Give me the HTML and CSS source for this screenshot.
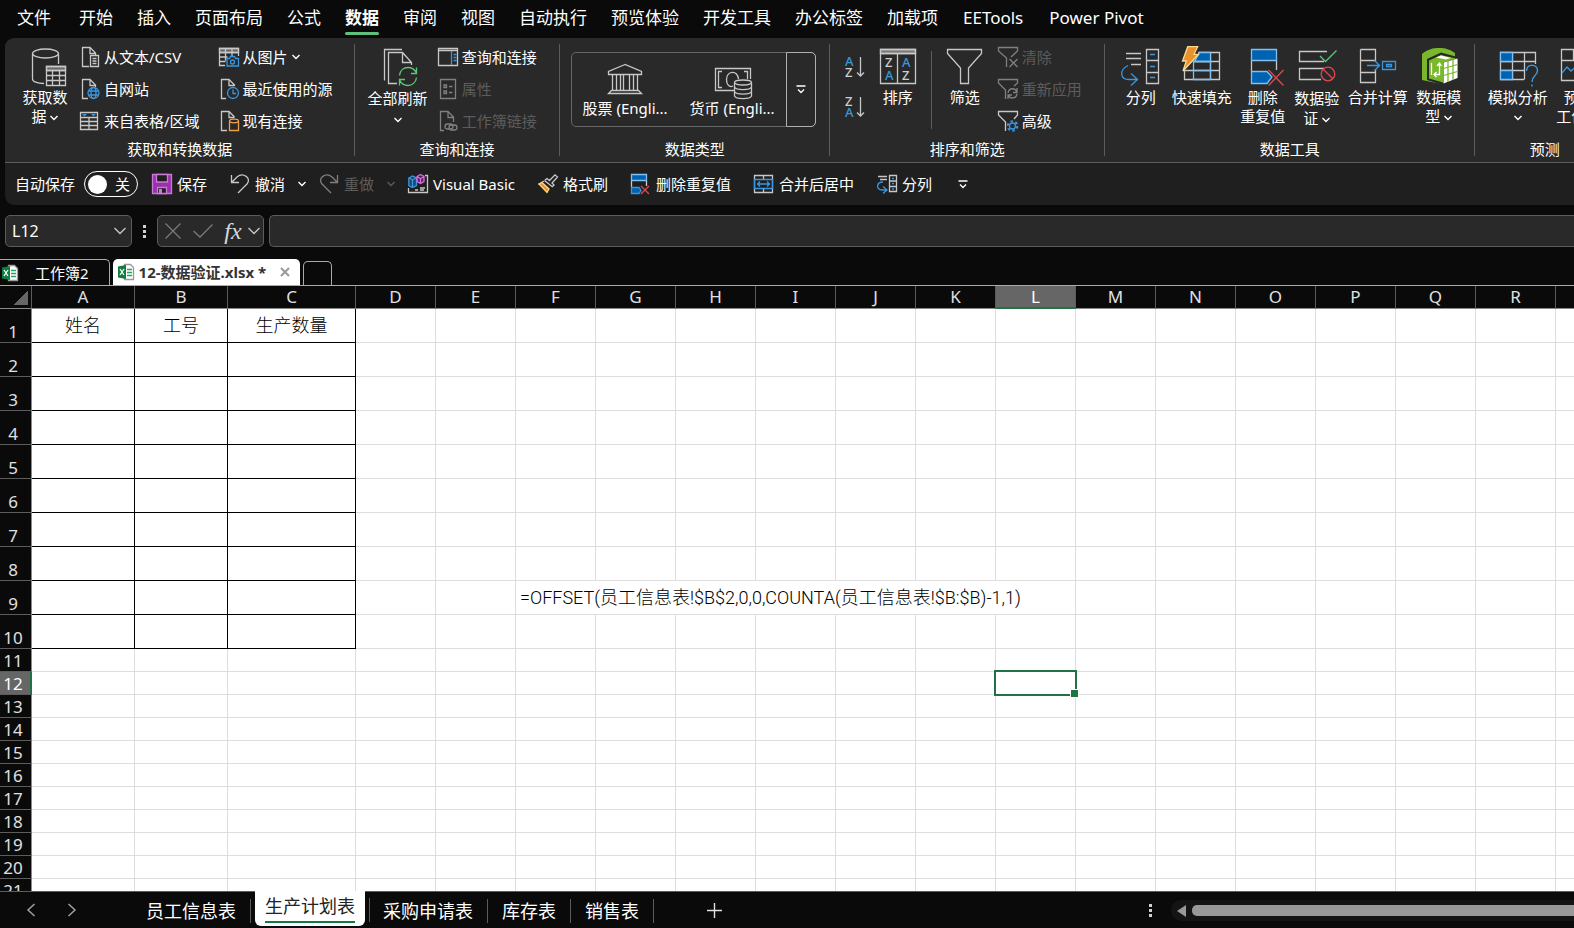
FILE: index.html
```html
<!DOCTYPE html>
<html lang="zh-CN">
<head>
    <meta charset="UTF-8">
    <meta name="viewport" content="width=device-width, initial-scale=1.0">
    <title>12-数据验证.xlsx</title>
    <link rel="stylesheet" href="styles.css">
</head>
<body>
    <!-- Menu -->
    <nav class="menu">
        <a class="menu-item menu-file" href="#">文件</a>
        <a class="menu-item" href="#">开始</a>
        <a class="menu-item" href="#">插入</a>
        <a class="menu-item" href="#">页面布局</a>
        <a class="menu-item" href="#">公式</a>
        <a class="menu-item active" href="#">数据</a>
        <a class="menu-item" href="#">审阅</a>
        <a class="menu-item" href="#">视图</a>
        <a class="menu-item" href="#">自动执行</a>
        <a class="menu-item" href="#">预览体验</a>
        <a class="menu-item" href="#">开发工具</a>
        <a class="menu-item" href="#">办公标签</a>
        <a class="menu-item" href="#">加载项</a>
        <a class="menu-item menu-addin" href="#">EETools</a>
        <a class="menu-item menu-addin" href="#">Power Pivot</a>
    </nav>

    <!-- Ribbon -->
    <div class="ribbon">
        <section class="group group-get">
            <div class="group-body">
                <button class="big-btn">
                    <svg class="icon-big" viewBox="0 0 40 42">
                        <ellipse cx="20.5" cy="7.5" rx="13" ry="4.5"/>
                        <path d="M7.5 7.5V33C7.5 35.5 12 37.5 19 37.5M33.5 7.5V18"/>
                        <path fill="#666" d="M21.5 20.5h19v4h-19z"/>
                        <path d="M21.5 20.5h19v19h-19zM21.5 24.5h19M21.5 29.5h19M21.5 34.5h19M27.5 24.5v15M34.5 24.5v15"/>
                    </svg>
                    <span>获取数<br>据 <svg class="chev" viewBox="0 0 8 8"><path d="M.5 2L4 5.5 7.5 2"/></svg></span>
                </button>
                <div class="small-col">
                    <button class="small-btn">
                        <svg class="icon" viewBox="0 0 20 20"><path d="M9 19.5H2.5V.5H10L15.5 6V8M10 .5V6.5H15.5"/><path d="M10.5 8.5h8v11h-8zM12.5 11.5h4M12.5 14h4M12.5 16.5h4"/></svg>
                        从文本/CSV
                    </button>
                    <button class="small-btn">
                        <svg class="icon" viewBox="0 0 20 20"><path d="M8 19.5H2.5V.5H10L15.5 6V8M10 .5V6.5H15.5"/><g class="blue"><circle cx="13.5" cy="14" r="5.5"/><ellipse cx="13.5" cy="14" rx="2.5" ry="5.5"/><path d="M8.5 12h10M8.5 16h10"/></g></svg>
                        自网站
                    </button>
                    <button class="small-btn">
                        <svg class="icon" viewBox="0 0 20 20"><path d="M.5 1.5h17v17H.5zM.5 6.5h17M.5 10.5h17M.5 14.5h17M9 6.5v12"/><path class="fill-blue" d="M2 3h5L4.500 5.500zM11 3h5L13.500 5.500z"/></svg>
                        来自表格/区域
                    </button>
                </div>
                <div class="small-col">
                    <button class="small-btn">
                        <svg class="icon" viewBox="0 0 20 20"><path fill="#666" d="M.5 1.500h19v4H.5z"/><path d="M6 18.500H.5V1.500h19V9M.5 5.500h19M.5 10h8M.5 14.500h6M6.500 1.500v12M13 1.500v8"/><g class="blue"><path d="M8 11.500h2.500l1-2h4l1 2H19.500v7.500H8z"/><circle cx="13.500" cy="15" r="2"/></g></svg>
                        从图片 <svg class="chev" viewBox="0 0 8 8"><path d="M.5 2L4 5.5 7.5 2"/></svg>
                    </button>
                    <button class="small-btn">
                        <svg class="icon" viewBox="0 0 20 20"><path d="M7 19.5H2.5V.5H10L15.5 6V7M10 .5V6.5H15.5"/><g class="blue"><circle cx="14" cy="14" r="5.5"/><path d="M14 10.500V14.500H17"/></g></svg>
                        最近使用的源
                    </button>
                    <button class="small-btn">
                        <svg class="icon" viewBox="0 0 20 20"><path d="M8 19.5H2.5V.5H10L15.5 6M10 .5V6.5H15.5"/><g class="orange"><ellipse cx="15" cy="10" rx="4.500" ry="1.800"/><path d="M10.500 10v9.500h9V10"/></g></svg>
                        现有连接
                    </button>
                </div>
            </div>
            <div class="group-label">获取和转换数据</div>
        </section>

        <section class="group group-query">
            <div class="group-body">
                <button class="big-btn split">
                    <svg class="icon-big" viewBox="0 0 40 42">
                        <path d="M6.500 34.500V3.500H24M19 37.500H10.500V6.500H24.500L33.500 16.500V19M24.500 6.500V16.500H33.500"/>
                        <g class="green"><path d="M21.500 29.500C22 24 26 21.500 30 21.500C34 21.500 37 24 38.500 27M38.500 21.500V27.500H33M38.500 31.500C38 36.500 34 39.500 30 39.500C26 39.500 23 37 21.500 34M21.500 39.500V33.500H27"/></g>
                    </svg>
                    <span>全部刷新<br><svg class="chev" viewBox="0 0 8 8"><path d="M.5 2L4 5.5 7.5 2"/></svg></span>
                </button>
                <div class="small-col">
                    <button class="small-btn">
                        <svg class="icon" viewBox="0 0 20 20"><path d="M.5 1.500h19v17H.5zM.5 3.500h19"/><g class="blue"><path d="M13.500 4v14"/><path d="M15.500 7.500h3M15.500 10.500h3M15.500 13.500h3"/></g></svg>
                        查询和连接
                    </button>
                    <button class="small-btn" disabled>
                        <svg class="icon" viewBox="0 0 20 20"><path d="M2.500.5h15v19h-15zM6 6h2.500v2.500H6zM6 12h2.500v2.500H6zM11 7.500h3.500M11 13.500h3.500"/></svg>
                        属性
                    </button>
                    <button class="small-btn" disabled>
                        <svg class="icon" viewBox="0 0 20 20"><path d="M6 19.500H2.500V.5H10L15.500 6V11M10 .5V6.500H15.500"/><rect x="7" y="13" width="8" height="5" rx="2.500"/><rect x="11" y="14" width="8" height="5" rx="2.500"/></svg>
                        工作簿链接
                    </button>
                </div>
            </div>
            <div class="group-label">查询和连接</div>
        </section>

        <section class="group group-types">
            <div class="group-body">
                <div class="gallery">
                    <button class="gallery-item">
                        <svg class="icon-gallery" viewBox="0 0 40 36"><path d="M20 2.500L3.500 9.500V12.500H36.500V9.500ZM7.500 12.500V28M11.500 12.500V28M15.500 12.500V28M18.500 12.500V28M24.500 12.500V28M28.500 12.500V28M32.500 12.500V28M6.500 28.500H33.500L36.500 31.500H3.500Z"/></svg>
                        股票 (Engli...
                    </button>
                    <button class="gallery-item">
                        <svg class="icon-gallery" viewBox="0 0 40 36"><path d="M22 28.500H3.500V6.500H38.500V17M10 9.500H6.500V25.500H10M32 9.500H35.500V17M21 24C17 26 14.500 22 14.500 17.500C14.500 9 25.500 7 26.500 17"/><ellipse cx="31" cy="20.500" rx="8.500" ry="2.500"/><path d="M22.500 20.500V34C24 37.500 38 37.500 39.500 34V20.500M22.500 25C24 28.500 38 28.500 39.500 25M22.500 29.500C24 33 38 33 39.500 29.500"/></svg>
                        货币 (Engli...
                    </button>
                    <button class="gallery-more" aria-label="更多"><svg class="more" viewBox="0 0 10 9"><path d="M.5 1H9.500M2 4.500L5 7.500 8 4.500"/></svg></button>
                </div>
            </div>
            <div class="group-label">数据类型</div>
        </section>

        <section class="group group-sort">
            <div class="group-body">
                <div class="order-col">
                    <button class="order-btn" aria-label="升序">
                        <svg class="icon" viewBox="0 0 20 20"><text class="letter-blue" x="0" y="9">A</text><text class="letter" x="0" y="20">Z</text><path d="M15.500 0V19M12 15.500L15.500 19 19 15.500"/></svg>
                    </button>
                    <button class="order-btn" aria-label="降序">
                        <svg class="icon" viewBox="0 0 20 20"><text class="letter" x="0" y="9">Z</text><text class="letter-blue" x="0" y="20">A</text><path d="M15.500 0V19M12 15.500L15.500 19 19 15.500"/></svg>
                    </button>
                </div>
                <button class="big-btn">
                    <svg class="icon-big" viewBox="0 0 40 42">
                        <path fill="#777" d="M2.500 3.500h35v4h-35z"/>
                        <path d="M2.500 3.500h35v34h-35zM2.500 7.500h35M19.500 7.500v30"/>
                        <text class="letter" x="7" y="21">Z</text><text class="letter-blue" x="24" y="21">A</text>
                        <text class="letter-blue" x="7" y="34">A</text><text class="letter" x="24" y="34">Z</text>
                    </svg>
                    <span>排序</span>
                </button>
                <div class="inner-line"></div>
                <button class="big-btn">
                    <svg class="icon-big" viewBox="0 0 40 42"><path d="M2.500 3.500H36.500V7.500L23.500 22V37.500H15.500V22L2.500 7.500Z"/></svg>
                    <span>筛选</span>
                </button>
                <div class="small-col">
                    <button class="small-btn" disabled>
                        <svg class="icon" viewBox="0 0 20 20"><path d="M8.500 20V11L.5 4V.5H19.500V4L13 10M11.500 12L19.500 20M19.500 12L11.500 20"/></svg>
                        清除
                    </button>
                    <button class="small-btn" disabled>
                        <svg class="icon" viewBox="0 0 20 20"><path d="M7.500 20V11L.5 4V.5H19.500V4L16 7M10 14C11 8 18 9 18.500 13M19 9V13.500H15M19 15C18 20 12 20 10.500 16.500M10 20V16H14"/></svg>
                        重新应用
                    </button>
                    <button class="small-btn">
                        <svg class="icon" viewBox="0 0 20 20"><path d="M7.500 20V11L.5 4V.5H19.500V4L16 8"/><g class="blue"><circle cx="14.500" cy="15" r="3"/><circle cx="14.500" cy="15" r="4.800" stroke-width="2" stroke-dasharray="2.500 2.500"/></g></svg>
                        高级
                    </button>
                </div>
            </div>
            <div class="group-label">排序和筛选</div>
        </section>

        <section class="group group-tools">
            <div class="group-body">
                <button class="big-btn">
                    <svg class="icon-big" viewBox="0 0 40 42">
                        <path d="M5 7.500H20M5 12.500H20M10 18.500H20M25.500 3.500h12v34h-12zM25.500 14.500h12M25.500 26.500h12"/>
                        <g class="blue"><path d="M29 8.500h5M29 20.500h5M29 31.500h5M7 19.500C-2 24 -1 33.500 8 33.500H16M10 27.500L16.500 33.500 10 39.500"/></g>
                    </svg>
                    <span>分列</span>
                </button>
                <button class="big-btn">
                    <svg class="icon-big" viewBox="0 0 40 42">
                        <path d="M16 6.500H37.500V33.500H2.500V24M28.500 6.500v27M2.500 24.500h35M12 15.500h25.500"/>
                        <path fill="#0063b1" stroke="#83beec" d="M17.500 6.500H28.500V15.500H12.500Z"/>
                        <path stroke="#83beec" d="M11.500 15.500h17v18h-17zM11.500 24.500h17"/>
                        <path fill="#e8912d" stroke="#fbd98d" d="M5.700.7H15.700L12 8.300H16.500L1 25L4.300 15H.5Z"/>
                    </svg>
                    <span>快速填充</span>
                </button>
                <button class="big-btn">
                    <svg class="icon-big" viewBox="0 0 40 42">
                        <path d="M8.500 14.500V25.500M33.500 14.500V24"/>
                        <path fill="#0063b1" stroke="#83beec" d="M8.500 3.500h25v11h-25zM8.500 25.500H24L29 31L24 37.500H8.500Z"/>
                        <path class="red" d="M25.500 24L40.500 39.500M40.500 24L25.500 39.500"/>
                    </svg>
                    <span>删除<br>重复值</span>
                </button>
                <button class="big-btn split">
                    <svg class="icon-big" viewBox="0 0 40 42">
                        <path d="M30 5.500H2.500V15.500H27M27 22.500H2.500V33.500H24"/>
                        <path class="green" d="M23 10L28.500 15.500 39.500 4.500"/>
                        <g class="red"><circle cx="31" cy="28" r="6.800"/><path d="M26.500 23.500L35.500 32.500"/></g>
                    </svg>
                    <span>数据验<br>证 <svg class="chev" viewBox="0 0 8 8"><path d="M.5 2L4 5.5 7.5 2"/></svg></span>
                </button>
                <button class="big-btn">
                    <svg class="icon-big" viewBox="0 0 40 42">
                        <path d="M2.500 3.500V36.500H17.500V26.500H2.500M2.500 14.500H17.500V3.500H2.500M17.500 14.500V16M17.500 23V26.500"/>
                        <g class="blue"><path d="M9 19.500H21.500M16.500 14.500L21.500 19.500 16.500 24.500M24.500 15.500h13v8h-13zM28.500 18.500h5v2h-5z"/></g>
                    </svg>
                    <span>合并计算</span>
                </button>
                <button class="big-btn">
                    <svg class="icon-big" viewBox="0 0 40 42">
                        <path fill="#78b82a" stroke="none" d="M3 8C9 3 14 2 20 2C27 2 32 4 36 7V13L38.500 14V32L22 38L3 34Z"/>
                        <path fill="#292929" stroke="none" d="M8 13L22 6.500L38.500 11V33L22 38.500L8 34Z"/>
                        <path fill="#78b82a" stroke="none" d="M10 14.500L22 9L37 12.500L24 16.500V36.500L10 32.500Z"/>
                        <path fill="#fff" stroke="none" d="M24.500 16.500L38.500 12.500V32L24.500 37.500Z"/>
                        <path fill="#fff" stroke="none" d="M17 11.500L22 9.500L32 12L27 13.500Z"/>
                        <path stroke="#78b82a" d="M24.500 22.500L38.500 18.500M24.500 29.500L38.500 25.500M29 14V36M34 13V34"/>
                        <path stroke="#fff" d="M12.500 17V29M20.500 17.500V28.500H15.500M18 20L20.500 17 22.500 20M17.500 26L15 28.500 17.500 31"/>
                    </svg>
                    <span>数据模<br>型 <svg class="chev" viewBox="0 0 8 8"><path d="M.5 2L4 5.5 7.5 2"/></svg></span>
                </button>
            </div>
            <div class="group-label">数据工具</div>
        </section>

        <section class="group group-forecast">
            <div class="group-body">
                <button class="big-btn">
                    <svg class="icon-big" viewBox="0 0 40 42">
                        <path d="M26 33.500H2.500V6.500H37.500V18M14.500 6.500v27M26.500 6.500v27M2.500 15.500h35M2.500 24.500h24"/>
                        <path fill="#0063b1" stroke="#83beec" d="M2.500 6.500h12v9h-12zM2.500 24.500h12v9h-12z"/>
                        <g class="blue"><path stroke-width="1.500" d="M28.500 25C28.500 17 39.500 17.500 39.500 24.500C39.500 30 34 29 34 36M34 38.500V40.500"/></g>
                    </svg>
                    <span>模拟分析<br><svg class="chev" viewBox="0 0 8 8"><path d="M.5 2L4 5.5 7.5 2"/></svg></span>
                </button>
                <button class="big-btn">
                    <svg class="icon-big" viewBox="0 0 40 42">
                        <path d="M2.500 3.500h34v31h-34zM2.500 14.500h34M14.500 3.500v11M25.500 3.500v11"/>
                        <path class="blue" d="M3 27L8 21L12 25L20 18L28 26"/>
                    </svg>
                    <span>预测<br>工作表</span>
                </button>
            </div>
            <div class="group-label">预测</div>
        </section>
    </div>

    <!-- Quick access toolbar -->
    <div class="quick">
        <label class="autosave">
            自动保存
            <input class="autosave-input" type="checkbox">
            <span class="switch"><span class="knob"></span>关</span>
        </label>
        <button class="quick-btn">
            <svg class="icon" viewBox="0 0 20 20"><path fill="#9b2fae" stroke="#c77ad6" d="M.5.5h19v19H.5z"/><path fill="#1f1f1f" stroke="#c77ad6" d="M4.500.5h11v7.500h-11zM5.500 13.500h9v6h-9z"/><path fill="#c77ad6" stroke="none" d="M7 15h3v4H7z"/></svg>
            保存
        </button>
        <div class="quick-split">
            <button class="quick-btn">
                <svg class="icon" viewBox="0 0 20 20"><path d="M1.500 1V8.500H9M1.500 8.500L7 3C13-2 22 4 17 10L8 19"/></svg>
                撤消
            </button>
            <button class="arrow-btn" aria-label="撤消列表"><svg class="chev" viewBox="0 0 8 8"><path d="M.5 2L4 5.5 7.5 2"/></svg></button>
            <button class="quick-btn" disabled>
                <svg class="icon" viewBox="0 0 20 20"><path d="M18.500 1V8.500H11M18.500 8.500L13 3C7-2-2 4 3 10L12 19"/></svg>
                重做
            </button>
            <button class="arrow-btn" aria-label="重做列表" disabled><svg class="chev" viewBox="0 0 8 8"><path d="M.5 2L4 5.5 7.500 2"/></svg></button>
            <button class="quick-btn">
                <svg class="icon" viewBox="0 0 20 20"><path d="M17 1.500H19.500V18.500H.5V14M7 16h3M12 14h5M12 16h4"/><path fill="#164a73" stroke="#3a96dd" d="M.8 4L4.500 2L8.500 4V11.500L4.500 13.500L.8 11.500ZM4.500 5.500V13M.8 4L4.500 5.500L8.500 4"/><path fill="#5b2462" stroke="#d66bdd" d="M9 2.500L12.500.5L16 2.500V7.500L12.500 9.500L9 7.500ZM12.500 4.500V9M9 2.500L12.500 4.500L16 2.500"/></svg>
                Visual Basic
            </button>
        </div>
        <button class="quick-btn">
            <svg class="icon" viewBox="0 0 20 20"><path d="M6.500 6.500L14 12.500M7 6L9 4.500L11.500 6.500L17 .8L19.500 3L14 9L16 11L14 13"/><path d="M6 7L.5 10.500"/><path fill="#e8912d" stroke="#fbd98d" d="M1 10L4 8.500L11 15L9 18.500Z"/></svg>
            格式刷
        </button>
        <button class="quick-btn">
            <svg class="icon" viewBox="0 0 20 20"><path d="M.5 7V13M15.500 7V12"/><path fill="#0063b1" stroke="#83beec" d="M.5.5h15v6H.5z"/><path fill="#0063b1" stroke="#3a96dd" d="M.5 13.500H8L10 16.500L8 19.500H.5Z"/><path class="red" d="M10 12L18 20M18 12L10 20"/></svg>
            删除重复值
        </button>
        <button class="quick-btn">
            <svg class="icon" viewBox="0 0 20 20"><path d="M.5 1.500h18v17H.5zM9.500 1.500V5M9.500 15V18.500"/><g class="blue"><path d="M.5 5.500h18v9H.5zM3.500 10h12M6 7.500L3.500 10 6 12.500M13 7.500L15.500 10 13 12.500"/></g></svg>
            合并后居中
        </button>
        <button class="quick-btn">
            <svg class="icon" viewBox="0 0 20 20"><path d="M1 2.500H10M3 5.500H10M12.500 1.500h7v16h-7zM12.500 7h7M12.500 12.500h7"/><g class="blue"><path d="M15 4.500h2M15 9.500h2M15 15h2M6 8C-1 8-1 16 5 16H10M6 12.500L10 16 6 19.500"/></g></svg>
            分列
        </button>
        <button class="arrow-btn" aria-label="自定义快速访问工具栏"><svg class="more" viewBox="0 0 10 9"><path d="M.5 1H9.500M2 4.500L5 7.500 8 4.500"/></svg></button>
    </div>

    <!-- Formula bar -->
    <div class="formula-bar">
        <div class="name-box">
            <input class="name-input" type="text" value="L12" aria-label="名称框">
            <svg class="chev-wide" viewBox="0 0 12 8"><path d="M.5 1L6 6.500 11.500 1"/></svg>
        </div>
        <span class="dots"></span>
        <div class="fx-box">
            <button class="fx-btn" aria-label="取消"><svg class="icon-fx dim" viewBox="0 0 20 16"><path d="M2.500.5L17.500 15.500M17.500.5L2.500 15.500"/></svg></button>
            <button class="fx-btn" aria-label="输入"><svg class="icon-fx dim" viewBox="0 0 20 16"><path d="M.5 8L7 14 19.500 1.500"/></svg></button>
            <button class="fx-btn fx-text">fx</button>
            <svg class="chev-wide" viewBox="0 0 12 8"><path d="M.5 1L6 6.500 11.500 1"/></svg>
        </div>
        <input class="formula-input" type="text" aria-label="编辑栏">
    </div>

    <!-- Workbook tabs -->
    <div class="books">
        <button class="book">
            <svg class="icon-book" viewBox="0 0 16 16"><path fill="#fff" stroke="#999" d="M6.500.5H12.500L15.500 3.500V15.500H6.500Z"/><path stroke="#21a366" d="M9 5.500h5M9 8.500h5M9 11.500h5"/><path fill="#107c41" stroke="none" d="M0 2.500L8 1V15L0 13.500Z"/><path stroke="#fff" d="M2 5L6 11M6 5L2 11"/></svg>
            <span class="book-name">工作簿2</span>
        </button>
        <button class="book current">
            <svg class="icon-book" viewBox="0 0 16 16"><path fill="#fff" stroke="#999" d="M6.500.5H12.500L15.500 3.500V15.500H6.500Z"/><path stroke="#21a366" d="M9 5.500h5M9 8.500h5M9 11.500h5"/><path fill="#107c41" stroke="none" d="M0 2.500L8 1V15L0 13.500Z"/><path stroke="#fff" d="M2 5L6 11M6 5L2 11"/></svg>
            <span class="book-name">12-数据验证.xlsx *</span>
            <svg class="close" viewBox="0 0 10 10"><path d="M1 1L9 9M9 1L1 9"/></svg>
        </button>
        <button class="book book-new" aria-label="新建"></button>
    </div>

    <!-- Sheet -->
    <main class="sheet">
        <table class="grid" id="grid"></table>
    </main>

    <!-- Sheet tabs -->
    <footer class="bottom">
        <button class="nav-btn" aria-label="上一个"><svg class="icon-nav" viewBox="0 0 8 14"><path d="M7.500 1L1 7 7.500 13"/></svg></button>
        <button class="nav-btn" aria-label="下一个"><svg class="icon-nav" viewBox="0 0 8 14"><path d="M.5 1L7 7 .5 13"/></svg></button>
        <div class="tabs">
            <button class="tab">员工信息表</button>
            <button class="tab selected"><span class="tab-name">生产计划表</span></button>
            <button class="tab">采购申请表</button>
            <button class="tab">库存表</button>
            <button class="tab">销售表</button>
        </div>
        <button class="add-btn" aria-label="新工作表"><svg class="icon-add" viewBox="0 0 15 15"><path d="M7.500 0V15M0 7.500H15"/></svg></button>
        <span class="dots"></span>
        <div class="scroll">
            <span class="scroll-arrow"></span>
            <span class="scroll-thumb"></span>
        </div>
    </footer>

    <script src="script.js"></script>
</body>
</html>
```

FILE: styles.css
```css
* {
    box-sizing: border-box;
}

body {
    margin: 0;
    height: 100vh;
    display: flex;
    flex-direction: column;
    overflow: hidden;
    background-color: #0a0a0a;
    color: #fff;
    font-family: "Noto Sans", "Noto Sans CJK SC", sans-serif;
    font-size: 15px;
    line-height: 18px;
}

button, input {
    font: inherit;
    color: inherit;
    background: none;
    border: none;
    margin: 0;
    padding: 0;
}

button {
    white-space: nowrap;
    cursor: pointer;
}

button:disabled {
    color: #5c5c5c;
}

button:disabled svg {
    stroke: #808080;
}

.arrow-btn:disabled svg {
    stroke: #5c5c5c;
}

/* Icons */
svg {
    display: block;
    flex: none;
    fill: none;
    stroke: #c8c8c8;
    stroke-width: 1.3;
    overflow: visible;
}

.icon {
    width: 20px;
    height: 20px;
}

.icon-big {
    width: 40px;
    height: 42px;
}

.icon-gallery {
    width: 40px;
    height: 36px;
}

.chev {
    display: inline-block;
    width: 8px;
    height: 8px;
    stroke: #fff;
    stroke-width: 1.4;
}

.chev-wide {
    width: 12px;
    height: 8px;
}

.more {
    width: 10px;
    height: 9px;
    stroke: #fff;
}

.blue {
    stroke: #3a96dd;
}

.green {
    stroke: #5fc77a;
}

.red {
    stroke: #e0484d;
}

.orange {
    stroke: #f0a04b;
}

.fill-blue {
    fill: #3a96dd;
    stroke: none;
}

.letter, .letter-blue {
    fill: #d0d0d0;
    stroke: none;
    font-size: 13px;
    font-weight: 500;
}

.letter-blue {
    fill: #3a96dd;
}

/* Menu */
.menu {
    display: flex;
    flex: none;
    height: 38px;
    padding-left: 5px;
}

.menu-item {
    position: relative;
    padding: 0 12px;
    line-height: 36px;
    font-size: 17px;
    color: #fff;
    text-decoration: none;
    white-space: nowrap;
}

.menu-file {
    margin-right: 4px;
}

.menu-addin {
    padding: 0 13px;
}

.menu-item.active {
    font-weight: bold;
}

.menu-item.active::after {
    content: "";
    position: absolute;
    left: 12px;
    right: 12px;
    bottom: 3px;
    height: 3px;
    border-radius: 2px;
    background-color: #5fbf7f;
}

/* Ribbon */
.ribbon {
    display: flex;
    flex: none;
    margin-left: 5px;
    padding-top: 3px;
    background-color: #292929;
    border-bottom: 1px solid #5c5c5c;
    border-top-left-radius: 9px;
    overflow: hidden;
}

.group {
    position: relative;
    flex: none;
}

.group::after {
    content: "";
    position: absolute;
    top: 3px;
    right: 0;
    bottom: 6px;
    width: 1px;
    background-color: #5c5c5c;
}

.group-body {
    display: flex;
    height: 96px;
    padding: 0 9px;
    gap: 2px;
}

.group-label {
    line-height: 25px;
    text-align: center;
}

.group-get .group-body {
    gap: 4px;
    padding: 0 18px 0 13px;
}

.group-get .small-col + .small-col {
    margin-left: 7px;
}

.group-query .group-body {
    padding-right: 19px;
}

.group-types .group-body {
    padding: 0 14px 0 11px;
}

.group-sort .group-body {
    padding: 0 19px 0 11px;
}

.group-tools .group-body, .group-forecast .group-body {
    gap: 0;
}

.big-btn {
    display: flex;
    flex-direction: column;
    align-items: center;
    min-width: 54px;
    padding: 5px 4px 0;
    line-height: 19px;
}

.big-btn.split {
    line-height: 20px;
}

.small-col {
    display: flex;
    flex-direction: column;
}

.small-btn {
    display: flex;
    align-items: center;
    gap: 4px;
    height: 32px;
    padding: 0 4px;
}

.gallery {
    display: flex;
    height: 75px;
    margin-top: 11px;
    border: 1px solid #666;
    border-radius: 5px;
}

.gallery-item {
    display: flex;
    flex-direction: column;
    align-items: center;
    width: 107px;
    padding-top: 9px;
    line-height: 20px;
}

.gallery-more {
    display: flex;
    align-items: center;
    justify-content: center;
    width: 30px;
    margin: -1px -1px -1px 0;
    border: 1px solid #b0b0b0;
    border-radius: 0 5px 5px 0;
}

.order-col {
    display: flex;
    flex-direction: column;
    padding-top: 6px;
}

.order-btn {
    height: 40px;
    padding: 0 4px;
}

.inner-line {
    width: 1px;
    height: 78px;
    margin: 10px 4px 0;
    background-color: #5c5c5c;
}

/* Quick access toolbar */
.quick {
    display: flex;
    flex: none;
    align-items: center;
    gap: 23px;
    height: 42px;
    margin-left: 5px;
    padding-left: 10px;
    background-color: #1f1f1f;
    border-bottom-left-radius: 9px;
}

.autosave {
    display: flex;
    align-items: center;
    gap: 9px;
    margin-right: -9px;
}

.autosave-input {
    position: absolute;
    opacity: 0;
}

.switch {
    display: flex;
    align-items: center;
    gap: 8px;
    width: 54px;
    height: 26px;
    padding-left: 3px;
    border: 1px solid #fff;
    border-radius: 13px;
}

.knob {
    width: 19px;
    height: 19px;
    border-radius: 50%;
    background-color: #fff;
}

.quick-split {
    display: flex;
    gap: 9px;
}

.quick-btn {
    display: flex;
    align-items: center;
    gap: 5px;
}

.arrow-btn {
    display: flex;
    align-items: center;
    justify-content: center;
    width: 16px;
}

/* Formula bar */
.formula-bar {
    display: flex;
    flex: none;
    padding: 10px 0 12px 5px;
}

.name-box, .fx-box {
    display: flex;
    align-items: center;
    height: 32px;
    border: 1px solid #5c5c5c;
    border-radius: 5px;
    background-color: #292929;
}

.name-box {
    width: 127px;
    padding: 0 5px 0 6px;
}

.name-input {
    flex: 1;
    min-width: 0;
    font-size: 16px;
}

.dots {
    width: 3px;
    height: 13px;
    margin: 10px 11px 0;
    background: repeating-linear-gradient(#d0d0d0 0 3px, transparent 3px 5px);
}

.fx-box {
    width: 107px;
    gap: 10px;
    padding: 0 2px 0 5px;
}

.icon-fx {
    width: 20px;
    height: 16px;
}

.dim {
    stroke: #7a7a7a;
}

.fx-text {
    width: 20px;
    font-family: "Liberation Serif", serif;
    font-style: italic;
    font-size: 24px;
    line-height: 28px;
    color: #d8d8d8;
}

.fx-box .chev-wide {
    margin-left: -5px;
}

.formula-input {
    flex: 1;
    height: 32px;
    margin-left: 5px;
    padding: 0 8px;
    border: 1px solid #5c5c5c;
    border-right: none;
    border-radius: 5px 0 0 5px;
    background-color: #292929;
}

/* Workbook tabs */
.books {
    display: flex;
    flex: none;
    align-items: flex-end;
    gap: 3px;
    height: 27px;
    border-bottom: 1px solid #ababab;
}

.book {
    display: flex;
    align-items: center;
    height: 26px;
    gap: 17px;
    padding: 0 20px 0 2px;
    border: 1px solid #ababab;
    border-bottom: none;
    border-left: none;
    border-radius: 0 5px 0 0;
}

.book.current {
    gap: 5px;
    padding: 0 10px 0 5px;
    border: none;
    border-radius: 5px 5px 0 0;
    background-color: #fff;
    color: #333;
    font-weight: bold;
}

.book-new {
    width: 29px;
    height: 24px;
    border-left: 1px solid #ababab;
    border-radius: 5px 5px 0 0;
}

.icon-book {
    width: 16px;
    height: 16px;
}

.close {
    width: 10px;
    height: 10px;
    margin-left: 9px;
    stroke: #999;
    stroke-width: 2;
}

/* Sheet */
.sheet {
    flex: 1;
    min-height: 0;
    overflow: hidden;
    background-color: #fff;
    color: #000;
}

.grid {
    width: 1636px;
    table-layout: fixed;
    border-collapse: separate;
    border-spacing: 0;
}

.col-head {
    width: 32px;
}

.col-a {
    width: 103px;
}

.col-b {
    width: 93px;
}

.col-c {
    width: 128px;
}

.grid th {
    height: 23px;
    padding: 0;
    background-color: #0a0a0a;
    color: #e0e0e0;
    font-size: 17px;
    font-weight: normal;
    line-height: 20px;
    border-right: 1px solid #5c5c5c;
    border-bottom: 1px solid #8a8a8a;
}

.grid tbody th {
    padding-right: 5px;
    vertical-align: bottom;
    border-right-color: #8a8a8a;
    border-bottom-color: #5c5c5c;
}

.grid .corner {
    background: linear-gradient(135deg, transparent 50%, #666 50%) 14px 5px / 14px 14px no-repeat #0a0a0a;
}

.grid thead .picked {
    background-color: #666;
    color: #fff;
    border-bottom: 2px solid #217346;
}

.grid tbody .picked {
    background-color: #666;
    color: #fff;
    padding-right: 4px;
    border-right: 2px solid #217346;
}

.grid td {
    position: relative;
    height: 23px;
    padding: 0;
    font-family: Roboto, "Noto Sans CJK SC", sans-serif;
    font-size: 18px;
    font-weight: 300;
    line-height: 22px;
    white-space: nowrap;
    border-right: 1px solid #dedede;
    border-bottom: 1px solid #dedede;
}

.grid .tall th, .grid .tall td {
    height: 34px;
}

.grid .framed {
    text-align: center;
    border-color: #000;
}

.grid .formula {
    padding-left: 4px;
}

/* Active cell frame */
.cursor {
    position: absolute;
    inset: -2px;
    z-index: 1;
    border: 2px solid #217346;
}

.cursor::after {
    content: "";
    position: absolute;
    right: -4px;
    bottom: -4px;
    width: 7px;
    height: 7px;
    border: 1px solid #fff;
    background-color: #217346;
}

/* Sheet tabs */
.bottom {
    display: flex;
    flex: none;
    height: 37px;
    padding-left: 10px;
    border-top: 1px solid #5c5c5c;
}

.nav-btn {
    display: flex;
    align-items: center;
    justify-content: center;
    width: 41px;
}

.icon-nav {
    width: 8px;
    height: 14px;
    stroke: #a0a0a0;
    stroke-width: 1.5;
}

.tabs {
    display: flex;
    padding-left: 40px;
}

.tab {
    position: relative;
    padding: 2px 15px 0 14px;
    font-size: 18px;
    line-height: 30px;
}

.tab::after {
    content: "";
    position: absolute;
    top: 7px;
    right: 0;
    width: 1px;
    height: 24px;
    background-color: #5c5c5c;
}

.tab.selected {
    height: 35px;
    margin: -1px 4px 0;
    padding: 0 10px 3px;
    border-radius: 0 0 6px 6px;
    background-color: #fff;
    color: #222;
}

.tab.selected::after {
    right: -5px;
}

.tab-name {
    display: block;
    border-bottom: 2px solid #107c41;
}

.add-btn {
    padding: 0 53px;
}

.icon-add {
    width: 15px;
    height: 15px;
    stroke: #e0e0e0;
    stroke-width: 1.4;
}

.bottom .dots {
    margin: 12px 19px 0 auto;
}

.scroll {
    display: flex;
    align-items: center;
    width: 403px;
    height: 21px;
    margin-top: 8px;
    padding-left: 6px;
    gap: 6px;
    border-radius: 10px 0 0 10px;
    background-color: #141414;
}

.scroll-arrow {
    border: solid transparent;
    border-width: 6px 9px 6px 0;
    border-right-color: #999;
}

.scroll-thumb {
    flex: 1;
    height: 11px;
    border-radius: 5px 0 0 5px;
    background-color: #999;
}
```

FILE: script.js
```js
const columns = 'ABCDEFGHIJKLMNOPQRS'.split('');
const rowCount = 21;
const activeCell = { column: 'L', row: 12 };

// Cell contents
const cells = {
    A1: '姓名',
    B1: '工号',
    C1: '生产数量',
    F9: '=OFFSET(员工信息表!$B$2,0,0,COUNTA(员工信息表!$B:$B)-1,1)'
};

// The formula text runs over the empty cells F9 to L9
const spans = { F9: 7 };

const grid = document.getElementById('grid');

// Column headers
function buildHead() {
    const row = grid.createTHead().insertRow();
    const corner = document.createElement('th');
    corner.className = 'col-head corner';
    row.appendChild(corner);

    columns.forEach(column => {
        const th = document.createElement('th');
        th.textContent = column;
        if ('ABC'.includes(column)) th.className = `col-${column.toLowerCase()}`;
        if (column === activeCell.column) th.classList.add('picked');
        row.appendChild(th);
    });
}

// Rows
function buildRow(body, number) {
    const row = body.insertRow();
    if (number <= 10) row.className = 'tall';

    const th = document.createElement('th');
    th.textContent = number;
    if (number === activeCell.row) th.className = 'picked';
    row.appendChild(th);

    for (let i = 0; i < columns.length; i++) {
        const name = columns[i] + number;
        const td = row.insertCell();
        td.textContent = cells[name] || '';
        if (number <= 10 && i < 3) td.className = 'framed';
        if (spans[name]) {
            td.className = 'formula';
            td.colSpan = spans[name];
            i += spans[name] - 1;
        }
        if (name === activeCell.column + activeCell.row) {
            const cursor = document.createElement('div');
            cursor.className = 'cursor';
            td.appendChild(cursor);
        }
    }
}

buildHead();
const body = grid.createTBody();
for (let number = 1; number <= rowCount; number++) {
    buildRow(body, number);
}
```
